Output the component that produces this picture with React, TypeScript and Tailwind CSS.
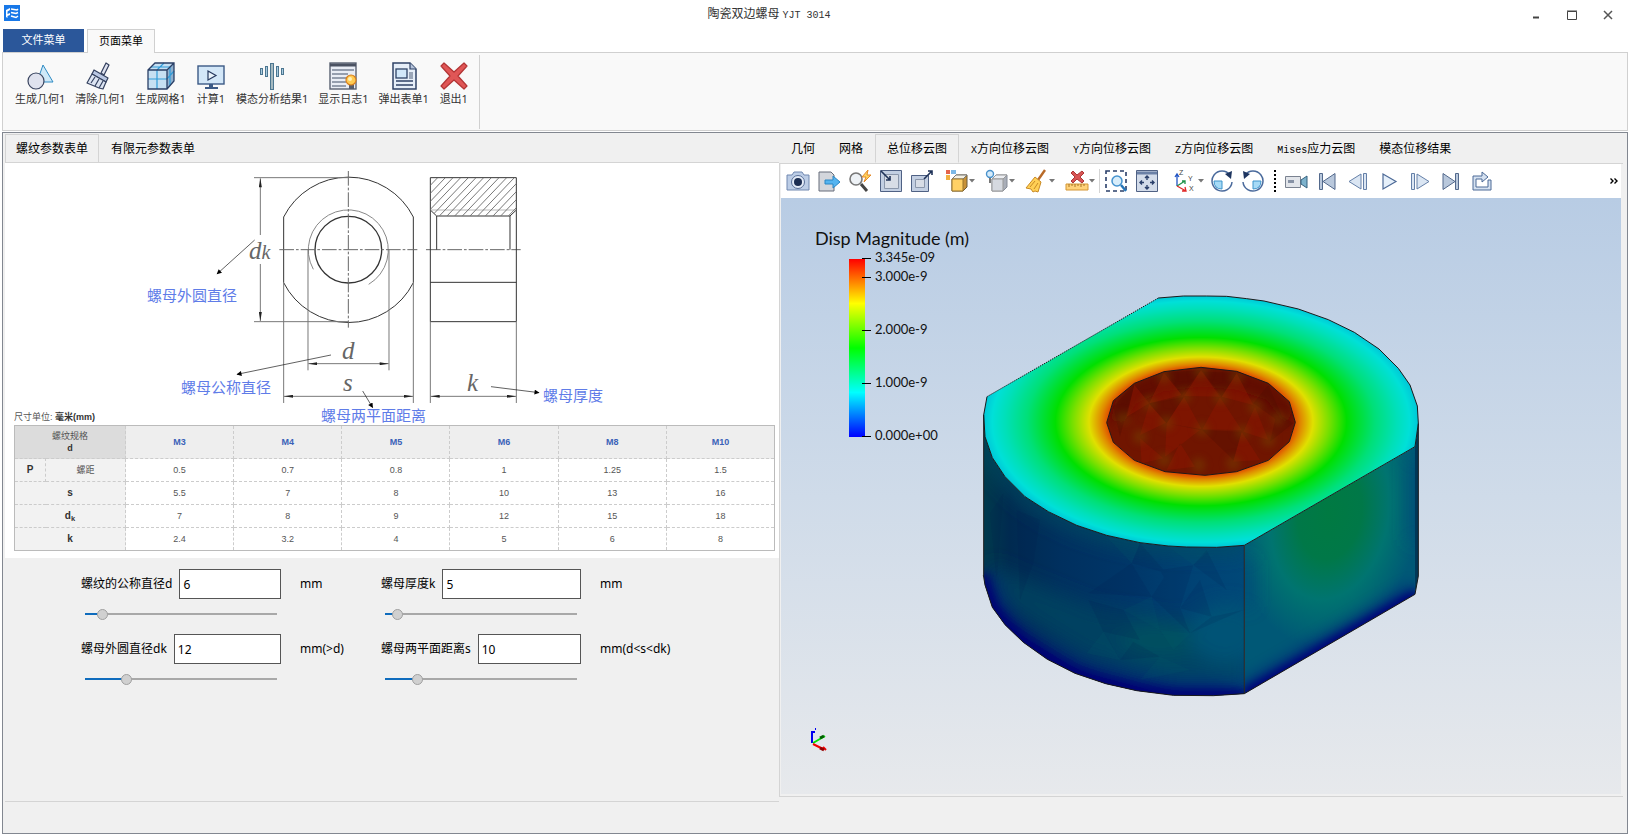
import { useState } from "react";
import type { ReactNode } from "react";

const ribbonItems: { label: string; icon: ReactNode }[] = [
  {
    label: "生成几何1",
    icon: (
      <>
        <path d="M17 3 27 20H11Z" fill="#cfe9f8" stroke="#2f8bc4" />
        <circle cx="10" cy="19" r="8" fill="#dfe2ee" stroke="#3a4560" strokeWidth="1.2" />
      </>
    ),
  },
  {
    label: "清除几何1",
    icon: (
      <g stroke="#34415f" strokeWidth="1.2" strokeLinejoin="round">
        <path d="m15 11 5-10 3 2-5 10Z" fill="#dfe3f0" />
        <path d="m8 8 14 8-2 4L6 12Z" fill="#b9c7e3" />
        <path d="M6 12 20 20l-3 7-4-1-12-5Z" fill="#dce4f2" />
        <path d="m9 15-4 6m8-4-4 7m8-5-4 7" fill="none" />
      </g>
    ),
  },
  {
    label: "生成网格1",
    icon: (
      <>
        <path d="M1 8 8 1h19v18l-7 8H1Z" fill="#c6dff2" />
        <path d="M20 8 27 1v18l-7 8Z" fill="#8fb0cf" />
        <path d="M10 8l7-7M10 8v19M1 17h19l7-8M4 5h19v18" fill="none" stroke="#2f9bd8" strokeWidth="1.2" />
        <path d="M1 8 8 1h19v18l-7 8H1ZM1 8h19v19M20 8l7-7" fill="none" stroke="#2a3f66" strokeWidth="1.3" />
      </>
    ),
  },
  {
    label: "计算1",
    icon: (
      <>
        <rect x="1" y="4" width="26" height="18" fill="#d3e7f8" stroke="#3c5a86" strokeWidth="1.4" />
        <path d="M11 9v9l8-4.500Z" fill="#e9f3fb" stroke="#26395f" strokeWidth="1.2" />
        <path d="M12 22h4v3h5v2H8v-2h4Z" fill="#3c5a86" />
      </>
    ),
  },
  {
    label: "模态分析结果1",
    icon: (
      <g fill="#a8cbe0" stroke="#4c7690">
        <rect x="2.500" y="6.500" width="2" height="6" />
        <rect x="7.500" y="4.500" width="2" height="10" />
        <rect x="12.500" y="1.500" width="3" height="26" fill="#a5b9c0" />
        <rect x="18.500" y="4.500" width="2" height="10" />
        <rect x="23.500" y="6.500" width="2" height="6" />
      </g>
    ),
  },
  {
    label: "显示日志1",
    icon: (
      <>
        <rect x="1" y="1" width="26" height="26" fill="#e9edf5" stroke="#5a6272" strokeWidth="1.4" />
        <path d="M1 3h26" stroke="#4b5262" strokeWidth="3" />
        <path d="M3 8h22M3 12h16M3 16h15M3 20h14M3 24h14" stroke="#7a8496" strokeWidth="1.3" />
        <path d="M20 21h5v6h-5Z" fill="#555c6b" />
        <circle cx="22" cy="18" r="5" fill="#ffcb52" stroke="#d97e1c" strokeWidth="1.2" />
        <circle cx="21" cy="17" r="2" fill="#fff0b8" />
      </>
    ),
  },
  {
    label: "弹出表单1",
    icon: (
      <>
        <path d="M3 1h17l6 6v20H3Z" fill="#e6eef8" stroke="#2f4266" strokeWidth="1.5" />
        <path d="M20 1v6h6" fill="#b7c5dc" stroke="#2f4266" strokeWidth="1.2" />
        <rect x="6" y="7" width="11" height="9" fill="#d2e8fa" stroke="#2f4266" strokeWidth="1.3" />
        <path d="M19 10h4v7h-4Z" fill="#9aa6b8" />
        <path d="M6 19h17M6 23h17" stroke="#2f4266" strokeWidth="1.4" />
      </>
    ),
  },
  {
    label: "退出1",
    icon: (
      <path
        d="m4 1 10 9L24 1l3 3-9 10 9 10-3 3-10-9-10 9-3-3 9-10L1 4Z"
        fill="#e05656"
        stroke="#b23434"
        strokeWidth="1.2"
        strokeLinejoin="round"
      />
    ),
  },
];

const resultTabs = [
  ["", "几何"],
  ["", "网格"],
  ["", "总位移云图"],
  ["X", "方向位移云图"],
  ["Y", "方向位移云图"],
  ["Z", "方向位移云图"],
  ["Mises", "应力云图"],
  ["", "模态位移结果"],
];

const sizes = ["M3", "M4", "M5", "M6", "M8", "M10"];
const specRows: { head: ReactNode; key: string; values: string[] }[] = [
  { key: "s", head: "s", values: ["5.5", "7", "8", "10", "13", "16"] },
  {
    key: "dk",
    head: (
      <>
        d<sub>k</sub>
      </>
    ),
    values: ["7", "8", "9", "12", "15", "18"],
  },
  { key: "k", head: "k", values: ["2.4", "3.2", "4", "5", "6", "8"] },
];
const pitches = ["0.5", "0.7", "0.8", "1", "1.25", "1.5"];

function TitleBar() {
  return (
    <header className="flex h-[29px] items-center bg-white px-1">
      <svg viewBox="0 0 16 16" className="mb-1 h-4 w-4">
        <rect width="16" height="16" fill="#1878e8" />
        <path d="m2 5 4-2v2L3.500 6.500V9L6 8v2l-2.500 1v2L2 12Z" fill="#fff" />
        <path d="m7 4 6 1 1-1M7 7.500l5 1 2-1M7 11l5 1.500 2-1.500" fill="none" stroke="#fff" strokeWidth="1.5" />
      </svg>
      <h1 className="flex-1 text-center text-[12px] leading-4 text-[#333]">
        陶瓷双边螺母 <span className="font-['Liberation_Mono',monospace] text-[10px]">YJT 3014</span>
      </h1>
      <div className="flex">
        <button aria-label="最小化" className="grid h-6 w-9 place-items-center">
          <svg viewBox="0 0 10 10" className="h-[10px] w-[10px]"><path d="M2 7.500h6" stroke="#444" strokeWidth="2" /></svg>
        </button>
        <button aria-label="最大化" className="grid h-6 w-9 place-items-center">
          <svg viewBox="0 0 10 10" className="h-[10px] w-[10px]" fill="none" stroke="#444"><path d="M.5 1.500h9v8h-9ZM0 1h10" /></svg>
        </button>
        <button aria-label="关闭" className="grid h-6 w-9 place-items-center">
          <svg viewBox="0 0 10 10" className="h-[10px] w-[10px]"><path d="m1 1 8 8m0-8L1 9" stroke="#555" strokeWidth="1.5" /></svg>
        </button>
      </div>
    </header>
  );
}

function Ribbon() {
  return (
    <div className="bg-white px-0.5">
      <nav className="flex gap-[3px] text-[11px]">
        <button className="ml-px h-[23px] w-[81px] bg-[#2b579a] text-white">文件菜单</button>
        <button className="-mb-px h-6 w-[68px] border border-b-0 border-[#d0d0d0] bg-[#f9f9f9] text-black">
          页面菜单
        </button>
      </nav>
      <div className="mb-px flex h-[79px] border border-[#d0d0d0] bg-[#f9f9f9] pt-0.5 pb-px">
        <div className="flex items-start gap-[10px] border-r border-[#d0d0d0] py-[7px] pr-[10px] pl-3">
          {ribbonItems.map((item) => (
            <button key={item.label} className="flex min-w-[30px] flex-col items-center text-[11px] leading-[18px] text-[#333]">
              <svg viewBox="0 0 28 28" className="h-7 w-7">{item.icon}</svg>
              <span className="whitespace-nowrap">{item.label}</span>
            </button>
          ))}
        </div>
      </div>
    </div>
  );
}

function NutDrawing() {
  return (
    <svg viewBox="5 163 774 262" className="h-[262px] w-full">
      <defs>
        <marker id="dim" viewBox="0 0 30 10" refX="30" refY="5" markerWidth="28" markerHeight="9" markerUnits="userSpaceOnUse" orient="auto-start-reverse">
          <path d="M0 0 30 5 0 10Z" fill="#222" />
        </marker>
        <marker id="head" viewBox="0 0 10 10" refX="9" refY="5" markerWidth="18" markerHeight="15" markerUnits="userSpaceOnUse" orient="auto">
          <path d="M0 0 10 5 0 10Z" />
        </marker>
        <clipPath id="section">
          <path d="M901 53h258v97l-19 18H920l-19-18Z" />
        </clipPath>
      </defs>
      <g transform="translate(130 160) scale(.3333333)" fill="none" stroke="#333" strokeWidth="3">
        <path d="M461 171A218 218 0 0 1 850 171V368A218 218 0 0 1 461 368Z" />
        <circle cx="655" cy="269" r="100" strokeWidth="4" />
        <path d="M550 328A120 120 0 1 1 716 373" stroke="#888" />
        <path d="M448 269H862M655 33V503M888 269H1172" strokeDasharray="44 6 8 6" stroke="#666" />
        <path d="M901 53h258v432H901ZM901 367h258M920 168h220M920 168V269M1140 168V269M901 150l19 18M1159 150l-19 18" />
        <path d="M901 150h258" stroke="#999" strokeWidth="2" />
        <g clipPath="url(#section)" stroke="#777">
          {Array.from({ length: 18 }, (_, i) => (
            <path key={i} d={`M${790 + i * 23} 168l110-115`} />
          ))}
        </g>
        <g stroke="#777">
          <path d="M372 53H655M372 485H655M534 269V631M777 269V631M461 368V729M850 368V729M901 485V729M1159 485V729" />
          <path d="M391 225V55" markerEnd="url(#dim)" />
          <path d="M391 312V483" markerEnd="url(#dim)" />
          <path d="M535 611H776" markerStart="url(#dim)" markerEnd="url(#dim)" />
          <path d="M462 709H849" markerStart="url(#dim)" markerEnd="url(#dim)" />
          <path d="M902 709H1158" markerStart="url(#dim)" markerEnd="url(#dim)" />
        </g>
        <g stroke="#111" strokeWidth="2">
          <path d="M374 240 261 342" markerEnd="url(#head)" />
          <path d="M603 585 321 643" markerEnd="url(#head)" />
          <path d="M698 693 728 743" markerEnd="url(#head)" />
          <path d="M1083 680 1227 698" markerEnd="url(#head)" />
        </g>
      </g>
      <g fill="#666" fontSize="25" fontStyle="italic" fontFamily="Liberation Serif, serif">
        <text x="249" y="259">d<tspan fontSize="20">k</tspan></text>
        <text x="342" y="359">d</text>
        <text x="343" y="391">s</text>
        <text x="467" y="391">k</text>
      </g>
      <g fill="#5f7ce8" fontSize="15">
        <text x="147" y="301">螺母外圆直径</text>
        <text x="181" y="393">螺母公称直径</text>
        <text x="321" y="421">螺母两平面距离</text>
        <text x="543" y="401">螺母厚度</text>
      </g>
      <text x="14" y="420" fill="#555" fontSize="9" fontFamily="Liberation Sans, Noto Sans CJK SC, sans-serif">
        尺寸单位: <tspan fontWeight="700" fill="#333">毫米(mm)</tspan>
      </text>
    </svg>
  );
}

function SpecTable() {
  const cell = "border border-dashed border-[#ccc]";
  return (
    <div className="pr-1 pb-[7px] pl-[9px]">
      <table className="w-full table-fixed border-collapse border border-[#bbb] text-center font-['Liberation_Sans','Noto_Sans_CJK_SC',sans-serif] text-[9px] leading-3 text-[#555]">
        <colgroup>
          <col className="w-[31px]" />
          <col className="w-20" />
          {sizes.map((s) => <col key={s} />)}
        </colgroup>
        <thead>
          <tr className="h-[33px] bg-[#eee]">
            <th colSpan={2} className="bg-[#dcdcdc] font-normal">
              螺纹规格
              <div className="font-bold text-[#333]">d</div>
            </th>
            {sizes.map((s) => (
              <th key={s} className={`${cell} text-[#3a62b8]`}>{s}</th>
            ))}
          </tr>
        </thead>
        <tbody>
          <tr className="h-[23px]">
            <th className={`${cell} bg-[#f2f2f2] text-[10px] text-[#333]`}>P</th>
            <th className={`${cell} bg-[#f2f2f2] font-normal`}>螺距</th>
            {pitches.map((v, i) => <td key={i} className={cell}>{v}</td>)}
          </tr>
          {specRows.map((row) => (
            <tr key={row.key} className="h-[23px]">
              <th colSpan={2} className={`${cell} bg-[#f2f2f2] text-[10px] text-[#333]`}>{row.head}</th>
              {row.values.map((v, i) => <td key={i} className={cell}>{v}</td>)}
            </tr>
          ))}
        </tbody>
      </table>
    </div>
  );
}

interface ParamProps {
  id: string;
  label: string;
  unit: string;
  initial: number;
  max: number;
}

function Param({ id, label, unit, initial, max }: ParamProps) {
  const [value, setValue] = useState(initial);
  const percent = (value / max) * 100;

  return (
    <div className="grid grid-cols-[200px_1fr] gap-x-[19px]">
      <div className="flex items-center gap-[7px]">
        <label htmlFor={id} className="whitespace-nowrap">{label}</label>
        <input
          id={id}
          value={value}
          onChange={(e) => setValue(Number(e.target.value) || 0)}
          className="h-[30px] min-w-0 flex-1 border border-[#555] bg-white px-[3px] outline-none"
        />
      </div>
      <span className="self-center whitespace-nowrap">{unit}</span>
      <input
        type="range"
        aria-label={label}
        min={0}
        max={max}
        value={value}
        onChange={(e) => setValue(Number(e.target.value))}
        style={{ backgroundImage: `linear-gradient(to right, #0f6cbd ${percent}%, #a8a8a8 ${percent}%)` }}
        className="mx-1 mt-[14px] h-0.5 appearance-none [&::-webkit-slider-thumb]:h-[11px] [&::-webkit-slider-thumb]:w-[11px] [&::-webkit-slider-thumb]:appearance-none [&::-webkit-slider-thumb]:rounded-full [&::-webkit-slider-thumb]:border [&::-webkit-slider-thumb]:border-[#a0a0a0] [&::-webkit-slider-thumb]:bg-[#d0d0d0]"
      />
    </div>
  );
}

function FormPanel() {
  return (
    <section className="mb-[31px] flex min-w-0 flex-col border-b border-[#d4d4d4]">
      <nav className="flex h-[29px] border-b border-[#d4d4d4] text-[12px]">
        <button className="border-x border-t border-[#d4d4d4] px-[10px]">螺纹参数表单</button>
        <button className="border-t border-transparent px-3">有限元参数表单</button>
      </nav>
      <div className="bg-white">
        <NutDrawing />
        <SpecTable />
      </div>
      <form className="grid grid-cols-[300px_1fr] gap-y-[19px] pt-[11px] pl-[76px] text-[12px]">
        <Param id="d" label="螺纹的公称直径d" unit="mm" initial={6} max={94} />
        <Param id="k" label="螺母厚度k" unit="mm" initial={5} max={122} />
        <Param id="dk" label="螺母外圆直径dk" unit="mm(>d)" initial={12} max={61} />
        <Param id="s" label="螺母两平面距离s" unit="mm(d<s<dk)" initial={10} max={66} />
      </form>
    </section>
  );
}

function Tool({ label, menu, children }: { label: string; menu?: boolean; children: ReactNode }) {
  return (
    <button
      aria-label={label}
      className={menu ? "flex h-8 w-10 shrink-0 items-center pl-2" : "flex h-8 w-[31px] shrink-0 items-center justify-center"}
    >
      <svg viewBox="0 0 24 24" className="h-6 w-6 shrink-0" fill="none">{children}</svg>
      {menu && (
        <svg viewBox="0 0 6 4" className="h-1 w-[6px] shrink-0"><path d="M0 0h6L3 3.500Z" fill="#777" /></svg>
      )}
    </button>
  );
}

function Toolbar() {
  return (
    <div className="flex h-[34px] items-center bg-white pl-px">
      <Tool label="截图">
        <path d="M1 6h5l2-3h8l2 3h5v15H1Z" fill="#bccde6" stroke="#7088b0" />
        <circle cx="12" cy="13" r="6.500" fill="#e4ecf8" stroke="#5a7098" />
        <circle cx="12" cy="13" r="4" fill="#1c2e52" />
      </Tool>
      <Tool label="导出">
        <path d="M2 3h12l3 3v16H2Z" fill="#d3d6dc" stroke="#666d7a" />
        <path d="M8 11h8V7l7 6-7 6v-4H8Z" fill="#55b4f0" stroke="#2b86c4" />
      </Tool>
      <Tool label="快速查看">
        <circle cx="8" cy="10" r="6" fill="#eef2f6" stroke="#777" strokeWidth="1.6" />
        <path d="m13 15 6 7" stroke="#444" strokeWidth="3" />
        <path d="m20 1-6 7h4l-2 5 7-7h-4Z" fill="#ffd35c" stroke="#e58a2a" />
      </Tool>
      <Tool label="缩小窗口">
        <path d="M1.500 1.500h21v21h-21Z" fill="#c3cfe2" stroke="#4f6184" />
        <path d="M5.500 5.500h14v14h-14Z" fill="#d8dde6" stroke="#8b97ab" />
        <path d="m2 2 9 9m0-4v4H7" stroke="#1f3258" strokeWidth="1.6" />
      </Tool>
      <Tool label="放大窗口">
        <path d="M1.500 6.500h17v16h-17Z" fill="#c3cfe2" stroke="#4f6184" />
        <path d="M5.500 10.500h9v8h-9Z" fill="#d8dde6" stroke="#8b97ab" />
        <path d="m14 10 8-8m-4 0h4v4" stroke="#1f3258" strokeWidth="1.6" />
      </Tool>
      <Tool label="显示模式" menu>
        <path d="M1 1h4v4H1Z" fill="#e4644c" />
        <path d="M6 1h5v4H6Z" fill="#7cb8e6" />
        <path d="M1 6h4v5H1Z" fill="#f0b040" />
        <path d="m7 10 4-4h11v12l-4 4H7Z" fill="#c89238" stroke="#6a5a3a" />
        <path d="m7 10 4-4h11l-4 4Z" fill="#f4f0e2" stroke="#777" />
        <path d="M7 10h11v12H7Z" fill="#ffd166" stroke="#98742c" />
      </Tool>
      <Tool label="标注" menu>
        <circle cx="5" cy="5" r="3.500" fill="#d6ecfb" stroke="#4a92cc" strokeWidth="1.4" />
        <path d="M4 9h2v5H4Z" fill="#777" />
        <path d="m7 10 4-4h11v12l-4 4H7Z" fill="#a9aeb8" stroke="#858c98" />
        <path d="m7 10 4-4h11l-4 4Z" fill="#eceef2" stroke="#999" />
        <path d="M7 10h11v12H7Z" fill="#d5d9e0" stroke="#999" />
      </Tool>
      <Tool label="清除" menu>
        <path d="m13 11 7-10" stroke="#b86a28" strokeWidth="2.400" />
        <path d="m10 8 6 5-3 10-3-1-2 1-2-3-5-1Z" fill="#ffcf55" stroke="#c98a24" />
        <path d="m10 12-5 6m8-4-4 6" stroke="#c98a24" />
      </Tool>
      <Tool label="删除测量" menu>
        <path d="m8 2 4 4 5-4 2 2-4 4 4 4-2 2-5-4-4 4-2-2 4-4-4-4Z" fill="#d85555" stroke="#ad3636" />
        <path d="M1 15h22v6H1Z" fill="#ffd27a" stroke="#d39635" />
        <path d="M4 15v3m3-3v2m3-2v3m3-3v2m3-2v3m3-3v2" stroke="#a87424" />
      </Tool>
      <span className="ml-0.5 h-6 w-px shrink-0 bg-[#d4d4d4]" />
      <Tool label="框选缩放">
        <path d="M2 2h20v20H2Z" stroke="#2a3f6a" strokeWidth="1.6" strokeDasharray="4 3" />
        <circle cx="13" cy="12" r="5" fill="#d8edfa" stroke="#4593cf" strokeWidth="1.5" />
        <path d="m17 16 5 6" stroke="#2676b8" strokeWidth="2.500" />
      </Tool>
      <Tool label="适应窗口">
        <path d="M1.500 1.500h21v21h-21Z" fill="#d3dcea" stroke="#4f6184" />
        <path d="M2 4h20" stroke="#6a80a6" strokeWidth="3" />
        <path d="M12 7v4m-2-2 2-2 2 2M12 20v-4m-2 2 2 2 2-2M5 13.500h4m-2-2-2 2 2 2M19 13.500h-4m2-2 2 2-2 2" stroke="#2a3f6a" strokeWidth="1.4" />
      </Tool>
      <span className="w-1" />
      <Tool label="坐标轴" menu>
        <path d="M3 17V6m-2 2 2-3 2 3" stroke="#2255c4" strokeWidth="1.3" />
        <path d="m3 17 8-5m-3 0h3v3" stroke="#1e9248" strokeWidth="1.3" />
        <path d="m3 17 9 5m-1-4 1 4H8" stroke="#e02828" strokeWidth="1.3" />
        <g fill="#444" fontSize="7" fontFamily="Liberation Sans, sans-serif">
          <text x="5" y="6">Z</text>
          <text x="14" y="12">Y</text>
          <text x="15" y="22">X</text>
        </g>
      </Tool>
      <Tool label="顺时针旋转">
        <path d="M20 6A10 10 0 1 0 22 13" stroke="#4a6a9c" strokeWidth="1.5" />
        <path d="m15 5 7-3-1 8Z" fill="#1e3560" />
        <path d="M4 12h8v8Q4 20 4 12Z" fill="#a6daf6" stroke="#3d94cc" />
      </Tool>
      <Tool label="逆时针旋转">
        <path d="M4 6A10 10 0 1 1 2 13" stroke="#4a6a9c" strokeWidth="1.5" />
        <path d="M9 5 2 2l1 8Z" fill="#1e3560" />
        <path d="M20 12h-8v8Q20 20 20 12Z" fill="#a6daf6" stroke="#3d94cc" />
      </Tool>
      <span className="mr-1 ml-1.5 h-[22px] w-0 shrink-0 border-l-2 border-dotted border-black" />
      <Tool label="录制">
        <path d="M1.500 7.500h15v11h-15Z" fill="#e2e5ea" stroke="#7a8290" />
        <path d="M4 11h6v3H4Z" fill="#8792a5" />
        <path d="m17 11 6-4v12l-6-4Z" fill="#7db2cc" stroke="#35617e" />
      </Tool>
      <Tool label="第一帧">
        <path d="M4.500 4.500h3v16h-3ZM20 4.500v16l-12-8Z" fill="#b9c8dc" stroke="#53698c" />
      </Tool>
      <Tool label="上一帧">
        <path d="M20.500 4.500v16h-3v-16ZM15 5v15L3 12.500Z" fill="#dbe6f3" stroke="#6580a8" />
      </Tool>
      <Tool label="播放">
        <path d="M6 5v15l13-7.500Z" fill="#e6f0fa" stroke="#4d6a97" strokeWidth="1.2" />
      </Tool>
      <Tool label="下一帧">
        <path d="M3.500 4.500v16h3v-16ZM9 5v15l12-7.500Z" fill="#dbe6f3" stroke="#6580a8" />
      </Tool>
      <Tool label="最后一帧">
        <path d="M19.500 4.500h-3v16h3ZM4 4.500v16l12-8Z" fill="#b9c8dc" stroke="#53698c" />
      </Tool>
      <Tool label="循环">
        <path d="M3 7v14h18V11h-3v7H6v-8h6v3l6-5-6-5v4Z" fill="#d5e1f0" stroke="#4d6a97" strokeLinejoin="round" />
      </Tool>
      <button aria-label="更多" className="mr-px ml-auto flex h-6 w-3 items-center justify-center">
        <svg viewBox="0 0 8 6" className="h-[6px] w-2" fill="none" stroke="#000" strokeWidth="1.4"><path d="m.5.5 2.500 2.500L.5 5.500M4.500.5 7 3 4.500 5.500" /></svg>
      </button>
    </div>
  );
}

const topArc = "L670 48 740 48 800 49 860 56 912 63 1015 87 1105 119 1183 157 1257 207 1315 265 1350 315 1372 378 1375 430 1365 500";
const frontArc = "L770 802 680 801 625 798 540 788 440 766 350 736 265 695 195 650 135 590 97 533 75 470 71 405";
const baseArc = "L760 1247 640 1246 530 1232 437 1211 345 1180 262 1138 190 1087 135 1034 97 982 75 915 70 885";
const boreEdge =
  "M723 262 830 274 925 310 988 365 1006 427 988 485 925 541 830 575 735 586 615 575 523 541 460 487 440 428 460 362 523 310 612 275Z";

const scale = [
  ["3.345e-09", 258],
  ["3.000e-9", 277],
  ["2.000e-9", 330],
  ["1.000e-9", 383],
  ["0.000e+00", 436],
] as const;

function Model() {
  return (
    <g transform="translate(960 280) scale(.3333333)">
      <defs>
        <radialGradient id="disp" gradientUnits="userSpaceOnUse" cx="0" cy="0" r="1" gradientTransform="translate(723 425) scale(652 377)">
          <stop offset=".42" stopColor="#e04000" />
          <stop offset=".46" stopColor="#e08a00" />
          <stop offset=".515" stopColor="#e0e000" />
          <stop offset=".59" stopColor="#78e000" />
          <stop offset=".67" stopColor="#00e000" />
          <stop offset=".8" stopColor="#00e078" />
          <stop offset=".9" stopColor="#00e0b8" />
          <stop offset=".96" stopColor="#00e0d8" />
          <stop offset="1" stopColor="#00c8d8" />
        </radialGradient>
        <linearGradient id="wall" gradientUnits="userSpaceOnUse" x1="70" x2="853" y1="0" y2="0">
          <stop offset="0" stopColor="#003a4c" />
          <stop offset=".1" stopColor="#002a50" />
          <stop offset=".3" stopColor="#00305f" />
          <stop offset=".55" stopColor="#003668" />
          <stop offset=".8" stopColor="#004274" />
          <stop offset="1" stopColor="#004878" />
        </linearGradient>
        <radialGradient id="flat" gradientUnits="userSpaceOnUse" cx="0" cy="0" r="1" gradientTransform="translate(1110 700) rotate(10) scale(270 400)">
          <stop offset="0" stopColor="#007a42" />
          <stop offset=".35" stopColor="#007848" />
          <stop offset=".65" stopColor="#007470" />
          <stop offset="1" stopColor="#005876" />
        </radialGradient>
        <clipPath id="wallClip"><path d={`M853 796${frontArc}V885L75 915 97 982 135 1034 190 1087 262 1138 345 1180 437 1211 530 1232 640 1246 760 1247 853 1241Z`} /></clipPath>
        <clipPath id="flatClip"><path d="M853 796 1365 500V943L853 1241Z" /></clipPath>
        <clipPath id="boreClip"><path d={boreEdge} /></clipPath>
        <filter id="soft" x="-50%" y="-50%" width="200%" height="200%"><feGaussianBlur stdDeviation="28" /></filter>
        <filter id="soft2" x="-50%" y="-50%" width="200%" height="200%"><feGaussianBlur stdDeviation="12" /></filter>
      </defs>

      {/* curved wall */}
      <g clipPath="url(#wallClip)">
        <path d="M60 380H860V1260H60Z" fill="url(#wall)" />
        <g filter="url(#soft)">
          <path d="M90 850 200 900 400 980 640 1020 860 1030V1200H640L380 1130 200 1020 90 940Z" fill="#004460" opacity=".8" />
          <ellipse cx="600" cy="1080" rx="120" ry="50" fill="#005060" />
          <ellipse cx="800" cy="1060" rx="110" ry="90" fill="#005276" />
          <path d={`M853 796${frontArc}`} fill="none" stroke="#005060" strokeWidth="34" />
          <path d={`M870 1262${baseArc}`} fill="none" stroke="#000074" strokeWidth="64" />
        </g>
        <path d={`M853 1248${baseArc}`} fill="none" stroke="#000074" strokeWidth="28" filter="url(#soft2)" />
        <g fill="#001c50" opacity=".13">
          <path d="M540 790 620 880 515 850ZM600 870 700 855 660 985ZM620 880 690 1060 575 950ZM490 990 540 1080 430 1055ZM740 810 800 930 700 855ZM520 1085 480 1140 600 1130ZM385 960 490 990 430 1055ZM755 1010 850 990 690 1060Z" />
          <path d="M575 950 515 850 385 940ZM660 985 755 1010 720 900ZM180 960 220 850 240 720 170 690ZM90 700 130 640 110 900Z" />
        </g>
        <g fill="#00706c" opacity=".1">
          <path d="M575 950 600 1050 490 990ZM600 1050 690 1060 640 1110ZM515 850 440 770 540 790ZM430 1055 480 1140 380 1120ZM700 855 750 810 625 800ZM600 1130 690 1170 540 1200Z" />
        </g>
      </g>

      {/* flat side */}
      <g clipPath="url(#flatClip)">
        <path d="M853 796 1365 500V943L853 1241Z" fill="url(#flat)" />
        <g filter="url(#soft)">
          <path d="M853 840V980" stroke="#004c78" strokeWidth="40" />
          <path d="M1375 540V780" stroke="#004c78" strokeWidth="50" />
          <path d="M840 1268 1385 950" stroke="#000078" strokeWidth="60" />
        </g>
        <path d="M853 1246 1370 946" stroke="#000078" strokeWidth="28" filter="url(#soft2)" />
      </g>
      <path d="M1365 500 1375 430V888L1365 943Z" fill="#003858" />

      {/* top face and bore */}
      <path d={`M595 54${topArc}L853 796${frontArc}L81 350Z`} fill="url(#disp)" />
      <g clipPath="url(#boreClip)">
        <path d={boreEdge} fill="#701500" />
        <path d="M450 420 470 350 530 300 620 265H830L940 310 1000 380 980 440 920 360 830 330 723 320 610 335 530 370 490 430Z" fill="#620800" filter="url(#soft2)" />
        <g fill="#8a1600" opacity=".55">
          <path d="M612 278 665 345 568 370ZM723 270 780 350 672 348ZM830 280 880 375 785 350ZM672 350 725 448 620 430ZM568 372 618 428 540 465ZM780 352 845 450 727 448ZM885 380 925 480 850 455ZM540 475 610 535 545 550ZM720 450 620 430 615 530ZM523 315 568 370 500 410ZM845 455 900 540 820 545ZM660 490 705 560 620 570Z" />
        </g>
        <g fill="#4c0c00" opacity=".3">
          <path d="M523 312 480 470 460 380ZM665 345 723 270 620 278ZM830 278 785 350 730 275ZM925 315 980 440 880 370ZM727 450 845 455 820 540ZM950 400 1000 430 930 485ZM568 370 672 350 620 430Z" />
        </g>
        <g fill="#785200" opacity=".45" filter="url(#soft2)">
          {[[723, 275], [612, 290], [830, 290], [672, 348], [782, 352], [568, 370], [885, 380], [620, 428], [727, 448], [847, 455], [540, 470], [925, 480], [612, 540], [716, 555], [820, 550], [490, 415], [955, 415]].map(([x, y]) => (
            <circle key={`${x}-${y}`} cx={x} cy={y} r="20" />
          ))}
        </g>
      </g>

      <g fill="none" stroke="#1a1a1a" strokeWidth="3">
        <path d={boreEdge} />
        <path d={`M595 54${topArc}L853 796${frontArc}`} />
        <path d="M81 350 71 405V885" />
        <path d="M595 54 81 350" strokeDasharray="4 3" />
        <path d={`M853 796V1241${baseArc}`} />
        <path d="M853 1241 1365 943 1375 888V430" />
      </g>
    </g>
  );
}

function Viewport() {
  return (
    <svg
      viewBox="781 198 840 596"
      preserveAspectRatio="xMinYMin meet"
      className="min-h-0 w-full flex-1 bg-linear-to-b from-[#b8cce4] via-[#cfdbe9] to-[#e7e9ec]"
    >
      <defs>
        <linearGradient id="rainbow" x1="0" y1="0" x2="0" y2="1">
          <stop offset="0" stopColor="#f00" />
          <stop offset=".25" stopColor="#ff0" />
          <stop offset=".5" stopColor="#0f0" />
          <stop offset=".75" stopColor="#0ff" />
          <stop offset="1" stopColor="#00f" />
        </linearGradient>
      </defs>
      <g fill="#111" fontFamily="Lato, sans-serif">
        <text x="815" y="245" fontSize="18">Disp Magnitude (m)</text>
        <rect x="849" y="259" width="16" height="178" fill="url(#rainbow)" />
        {scale.map(([label, y]) => (
          <g key={label}>
            <path d={`M862 ${y}.5h9`} stroke="#000" />
            <text x="875" y={y + 4} fontSize="13">{label}</text>
          </g>
        ))}
      </g>
      <Model />
      <g fill="none" strokeWidth="2">
        <path d="M812 743V731m0 1h3m1-3h-1" stroke="#0000f0" />
        <path d="m813 743 12-7" stroke="#00e000" />
        <path d="m820 738 4-2" stroke="#006000" strokeWidth="3" />
        <path d="m813 744 10 5m0-2 3 3" stroke="#f00000" />
        <path d="m820 748 4 2" stroke="#900000" strokeWidth="3" />
      </g>
    </svg>
  );
}

function ResultPanel() {
  const [active, setActive] = useState(2);
  return (
    <section className="mr-1 mb-9 flex min-w-0 flex-col">
      <nav className="flex h-[29px] text-[12px]">
        {resultTabs.map(([latin, text], i) => (
          <button
            key={latin + text}
            onClick={() => setActive(i)}
            className={`border px-[11px] whitespace-nowrap ${
              i === active ? "border-[#d4d4d4] border-b-transparent" : "border-transparent"
            }`}
          >
            {latin && <span className="font-['Liberation_Mono',monospace] text-[10px]">{latin}</span>}
            {text}
          </button>
        ))}
      </nav>
      <div className="flex min-h-0 flex-1 flex-col border border-r-0 border-[#d4d4d4] pr-0.5 pb-0.5 pl-px">
        <Toolbar />
        <Viewport />
      </div>
    </section>
  );
}

export default function App() {
  return (
    <div className="flex h-screen flex-col overflow-hidden bg-white font-['Noto_Sans','Noto_Sans_CJK_SC',sans-serif] text-black">
      <TitleBar />
      <Ribbon />
      <main className="mx-0.5 mb-px grid min-h-0 flex-1 grid-cols-[774fr_848fr] border border-[#828790] bg-[#f0f0f0] pt-px pl-0.5">
        <FormPanel />
        <ResultPanel />
      </main>
    </div>
  );
}
